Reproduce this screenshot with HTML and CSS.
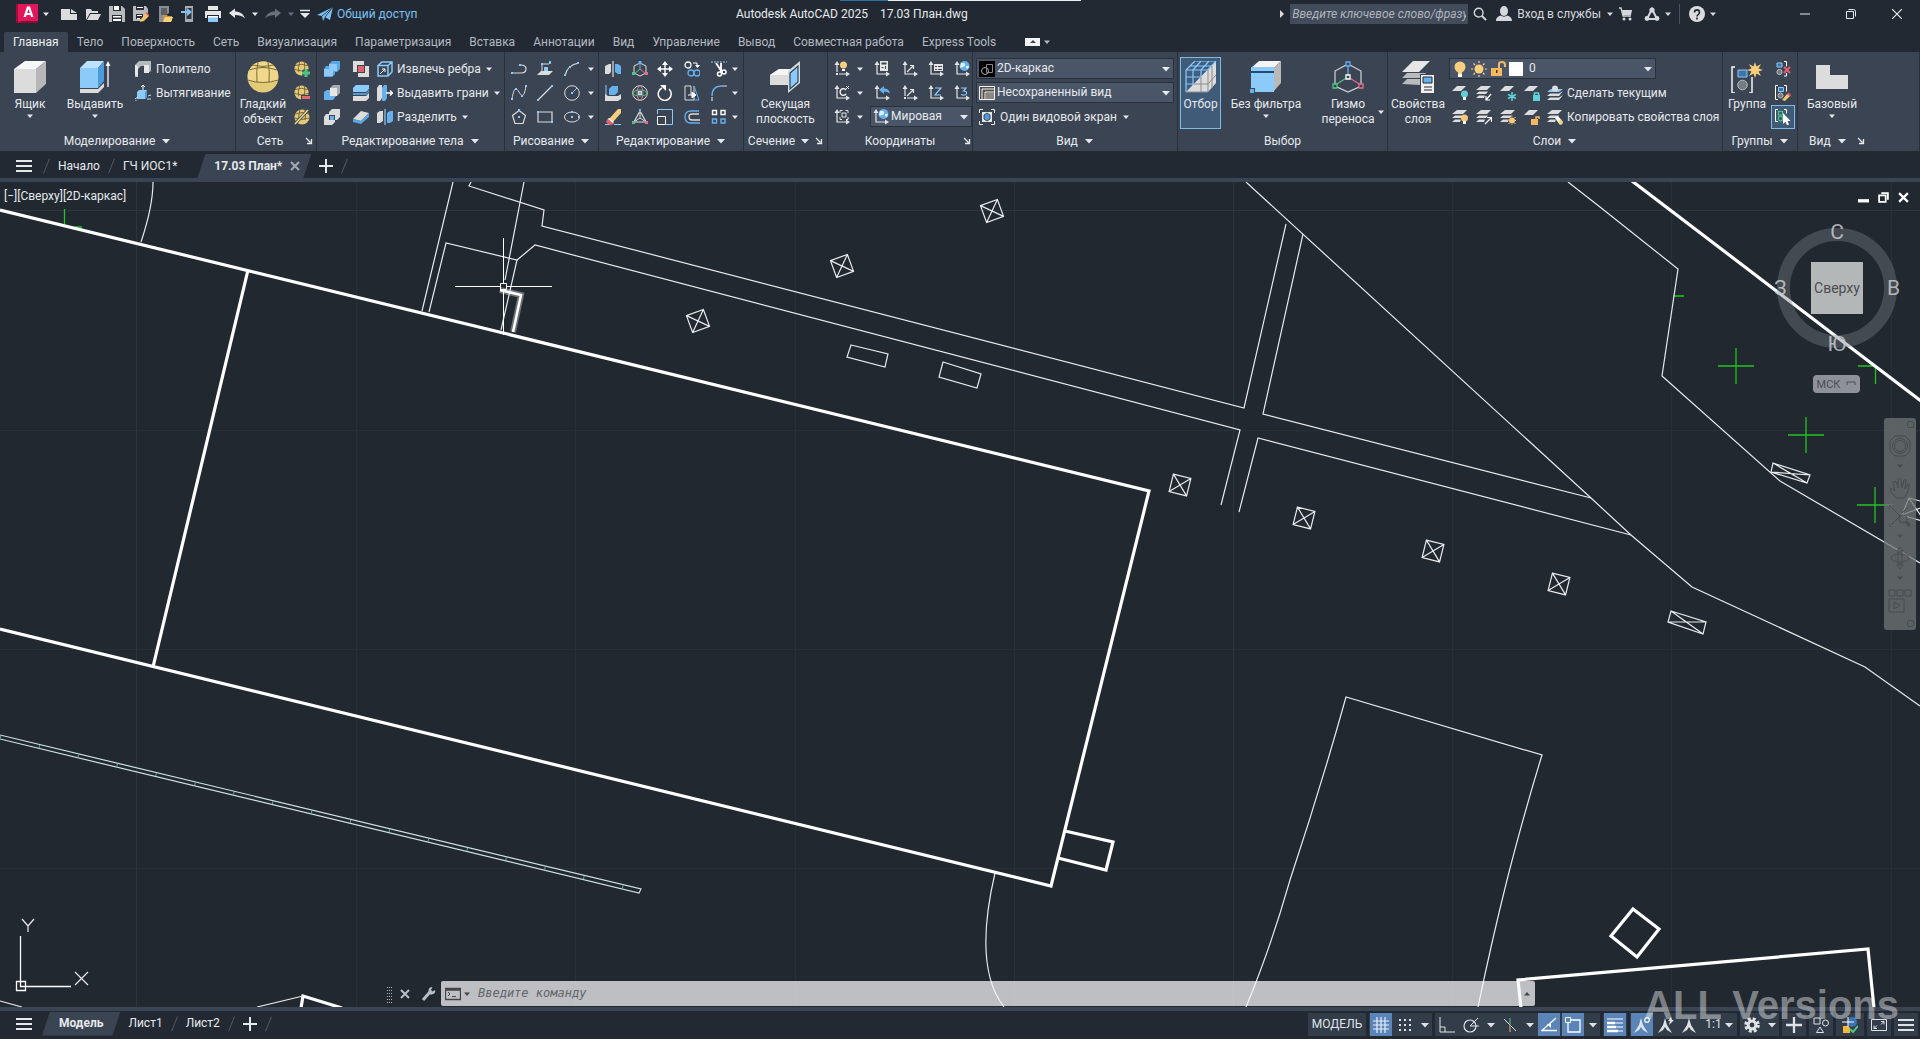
FILE: index.html
```html
<!DOCTYPE html>
<html lang="ru">
<head>
<meta charset="utf-8">
<title>Autodesk AutoCAD 2025 — 17.03 План.dwg</title>
<link rel="stylesheet" href="styles.css">
</head>
<body>
<svg class="sprite" aria-hidden="true">
  <defs>
    <symbol id="caret" viewBox="0 0 8 8"><path d="M1 2.500h6L4 6z" fill="currentColor"/></symbol>
    <symbol id="caret-lg" viewBox="0 0 10 8"><path d="M1 2h8L5 6.500z" fill="currentColor"/></symbol>
    <symbol id="launcher" viewBox="0 0 8 8"><path d="M1 1l4.500 4.500M6.500 2v4.500H2" stroke="currentColor" fill="none" stroke-width="1.300"/></symbol>
    <symbol id="menu" viewBox="0 0 16 12"><path d="M0 1h16M0 6h16M0 11h16" stroke="currentColor" stroke-width="2"/></symbol>
    <symbol id="plus" viewBox="0 0 14 14"><path d="M7 0v14M0 7h14" stroke="currentColor" stroke-width="2"/></symbol>
    <symbol id="cross" viewBox="0 0 10 10"><path d="M1 1l8 8M9 1l-8 8" stroke="currentColor" stroke-width="2"/></symbol>

    <symbol id="logo" viewBox="0 0 24 22"><path d="M1 1h5v19H1z" fill="#a50d39"/><path d="M0 20l5-4h18v4z" fill="#8d0a30"/><path d="M3 1h20v17H6l-3 2z" fill="#e2165a"/><path d="M8.500 14L12 3.500h3L18.500 14H16l-.6-2h-3.800l-.6 2zM12.200 10h2.600l-1.300-4z" fill="#fff"/></symbol>
    <symbol id="new" viewBox="0 0 16 16"><path d="M0 3h9v5h7v6H0zM10 3l6 4h-6z" fill="#dcdcdc"/></symbol>
    <symbol id="open" viewBox="0 0 16 16"><path d="M1 14V3h5l1 2h6v2H5z" fill="#dcdcdc"/><path d="M5.500 8H16l-3 6H2z" fill="#dcdcdc"/></symbol>
    <symbol id="save" viewBox="0 0 16 16"><path d="M0 0h13l3 3v13H0z" fill="#b9babc"/><path d="M4 0h8v5H4zM3 9h10v7H3z" fill="#262d37"/><path d="M5 0h5v4H5zM4 10h8v1.500H4zM4 13h8v2H4z" fill="#fff"/></symbol>
    <symbol id="saveas" viewBox="0 0 16 16"><path d="M0 0h13l2 3v4l-7 8H0z" fill="#b9babc"/><path d="M3 0h8v4H3zM3 8h7v5H3z" fill="#262d37"/><path d="M4 1h6v1H4zM4 9h5v1H4zM4 12h3v1H4z" fill="#fff"/><path d="M8 13l5-6 3 3-5 5-4 1z" fill="#f4c46c"/><path d="M12.500 7.500l3 2.500 1-1-3-3z" fill="#e0606c"/></symbol>
    <symbol id="webopen" viewBox="0 0 16 16"><path d="M2 0h10v7l-5 3v6H2z" fill="#8a8d91"/><path d="M4 2h6v7H4z" fill="#5b6068"/><path d="M6 9h4l1 1h4v5H6z" fill="#c9953c"/><path d="M8 11h8l-2 5H6z" fill="#f7d27c"/></symbol>
    <symbol id="websave" viewBox="0 0 16 16"><path d="M4 0h8v16H4z" fill="#a9abae"/><path d="M5.500 2h5v11h-5z" fill="#30363f"/><path d="M0 5h6V2l5 4-5 4V7H0z" fill="#7fc4f5"/></symbol>
    <symbol id="print" viewBox="0 0 16 16"><path d="M3 0h10v4H3zM0 5h16v7h-2V9H2v3H0z" fill="#e6e6e6"/><path d="M3 10h10v6H3z" fill="#8cc8f8"/><path d="M3 10h10v1.500H3z" fill="#fff"/></symbol>
    <symbol id="undo" viewBox="0 0 16 12"><path d="M0 5l6-4.500v3c5 0 8 2 10 7-3-3-6-3.500-10-3.500v3z" fill="currentColor"/></symbol>
    <symbol id="redo" viewBox="0 0 16 12"><path d="M16 5l-6-4.500v3c-5 0-8 2-10 7 3-3 6-3.500 10-3.500v3z" fill="currentColor"/></symbol>
    <symbol id="more" viewBox="0 0 10 9"><path d="M0 1h10" stroke="currentColor" stroke-width="1.500"/><path d="M0 3.500h10L5 8.500z" fill="currentColor"/></symbol>
    <symbol id="plane" viewBox="0 0 16 14"><path d="M0 8L16 0l-3 13-5-3-2 4-1-5z" fill="#7cc0f0"/><path d="M5 9l11-9-8 10" fill="none" stroke="#222933" stroke-width=".8"/></symbol>
    <symbol id="search" viewBox="0 0 16 16"><circle cx="6.500" cy="6.500" r="5" fill="none" stroke="currentColor" stroke-width="1.600"/><path d="M10 10l5 5" stroke="currentColor" stroke-width="2.200"/></symbol>
    <symbol id="user" viewBox="0 0 16 16"><ellipse cx="8" cy="5" rx="4" ry="5" fill="currentColor"/><path d="M0 15c0-4 3-5 5-5.500 2 1.500 4 1.500 6 0 2 .5 5 1.500 5 5.500z" fill="currentColor"/></symbol>
    <symbol id="cart" viewBox="0 0 14 14"><path d="M0 1h2l2 8h8" fill="none" stroke="currentColor" stroke-width="1.300"/><path d="M3 3h10l-1 5H4z" fill="currentColor"/><circle cx="5" cy="12" r="1.500" fill="currentColor"/><circle cx="11" cy="12" r="1.500" fill="currentColor"/></symbol>
    <symbol id="triad" viewBox="0 0 16 14"><path d="M8 2L3 12h10z" fill="none" stroke="currentColor" stroke-width="2"/><circle cx="8" cy="3" r="2.600" fill="currentColor"/><circle cx="3" cy="11.500" r="2.400" fill="currentColor"/><circle cx="13" cy="11.500" r="2.400" fill="currentColor"/></symbol>
    <symbol id="help" viewBox="0 0 16 16"><circle cx="8" cy="8" r="8" fill="#dcdcdc"/><path d="M5.500 6.500c0-3.500 5-3.500 5 0 0 2-2.500 2-2.500 4M8 11.500v2" fill="none" stroke="#222933" stroke-width="1.600"/></symbol>
    <symbol id="win-min" viewBox="0 0 10 10"><path d="M0 5h10" stroke="currentColor"/></symbol>
    <symbol id="win-max" viewBox="0 0 10 10"><path d="M.5 2.500h7v7h-7zM2.500 .5h5q2 0 2 2v5" fill="none" stroke="currentColor"/></symbol>
    <symbol id="win-close" viewBox="0 0 10 10"><path d="M0 0l10 10M10 0L0 10" stroke="currentColor" stroke-width="1.200"/></symbol>

    <symbol id="box" viewBox="0 0 32 32"><path d="M0 8L11 0h21L22 8z" fill="#f7f7f7"/><path d="M0 8h22v24H0z" fill="#dcdcdc"/><path d="M22 8L32 0v23L22 32z" fill="#b7b7b7"/></symbol>
    <symbol id="extrude" viewBox="0 0 32 32"><path d="M1 7L8 0h17l-6 7z" fill="#bde0fb"/><path d="M1 7h18v20H1z" fill="#8ccaf9"/><path d="M19 7l6-7v20l-6 7z" fill="#4d9bdc"/><path d="M1 28h18l6-6v4l-6 6H1z" fill="#dcdcdc"/><path d="M29 3v23" stroke="#fff" stroke-width="1.300"/><path d="M26.500 5L29 0l2.500 5z" fill="#fff"/></symbol>
    <symbol id="polysolid" viewBox="0 0 16 16"><path d="M0 4l4-4h12v10l-3 2H9V5H6L3 8v8H0z" fill="#b9babc"/><path d="M0 4l3 1v11l-3-2zM9 4h5v8H9z" fill="#e8e8e8"/></symbol>
    <symbol id="presspull" viewBox="0 0 16 16"><path d="M2 7l2-2h8v7l-2 2H2z" fill="#8ccaf9"/><path d="M10 7l2-2v7l-2 2z" fill="#4d9bdc"/><path d="M8 5V0M6 2l2-2 2 2" stroke="#fff" fill="none"/><path d="M0 14l3-2M0 16h2M12 14h4M13 11l3-1" stroke="#dcdcdc"/></symbol>
    <symbol id="sphere" viewBox="0 0 32 32"><circle cx="16" cy="16" r="15.500" fill="#e3ca78"/><path d="M2 9C6 3 10 .5 16 .5S27 3 30 9c2 6 1 8 0 12H2C.5 17 0 13 2 9z" fill="#efd88c"/><path d="M2 9q14-5 28 0M.5 19q15 5 31 0M11 1q-2 9-1 20M21 1q2 9 1 20M5 4q11 3 22 0" fill="none" stroke="#7c6a33"/></symbol>
    <symbol id="ball" viewBox="0 0 16 16"><circle cx="8" cy="8" r="7.500" fill="#e3ca78"/><path d="M1 5q7-3 14 0M.5 9q7 3 15 0M6 1q-2 6-1 11M11 1q1 6 0 10" fill="none" stroke="#6c5c30" stroke-width=".9"/></symbol>
    <symbol id="ball-plus" viewBox="0 0 16 16"><use href="#ball" width="15" height="15"/><path d="M12 8v8M8 12h8" stroke="#3b4453" stroke-width="5"/><path d="M12 8v8M8 12h8" stroke="#4fc67f" stroke-width="3"/></symbol>
    <symbol id="ball-minus" viewBox="0 0 16 16"><use href="#ball" width="15" height="15"/><path d="M7 12.500h9" stroke="#3b4453" stroke-width="5"/><path d="M8 12.500h8" stroke="#e06670" stroke-width="3"/></symbol>
    <symbol id="ball-cut" viewBox="0 0 16 16"><use href="#ball"/><path d="M0 16L15 0" stroke="#3b4453" stroke-width="3"/><path d="M1 15L14 1" stroke="#efd88c" stroke-width="1.500"/></symbol>

    <symbol id="union" viewBox="0 0 16 16"><path d="M5 3l3-3h8v8l-3 3h-2v2l-3 3H0V8l2-3h3z" fill="#5aa6e3"/><path d="M5 3h8v7H9v5H0V8h5z" fill="#8ccaf9"/></symbol>
    <symbol id="subtract" viewBox="0 0 16 16"><path d="M0 7l3-2h3v6h6l-3 4H0z" fill="#66b0ee"/><path d="M6 3l3-3h7v8l-3 3H6z" fill="#a9abae"/><path d="M6 3h7v8H6z" fill="#e6e6e6"/></symbol>
    <symbol id="intersect" viewBox="0 0 16 16"><path d="M5 3l3-3h8v8l-3 3h-2v2l-3 3H0V8l2-3h3z" fill="#dcdcdc"/><path d="M5 6h6v5H5z" fill="#3b4453"/><path d="M6 7h4v4H6z" fill="#66b0ee"/></symbol>
    <symbol id="interfere" viewBox="0 0 16 16"><path d="M0 0h11v5h5v11H5v-5H0z" fill="#dcdcdc"/><path d="M4 4h8v8H4z" fill="#3b4453"/><path d="M5 5h6v6H5z" fill="#e0606c"/></symbol>
    <symbol id="slice" viewBox="0 0 16 16"><path d="M0 3l3-3h13v4l-3 3H0z" fill="#8ccaf9"/><path d="M0 8h13l3-3v2l-3 3H0z" fill="#4d9bdc"/><path d="M0 11h13l3-3v5l-3 3H0z" fill="#dcdcdc"/></symbol>
    <symbol id="thicken" viewBox="0 0 16 16"><path d="M0 10l8-8 8 2-8 8z" fill="#dcdcdc"/><path d="M0 10l8 2 8-8v4l-8 7-8-2z" fill="#5aa6e3"/></symbol>
    <symbol id="edges" viewBox="0 0 16 16"><path d="M1 4.500L5 1h10v10l-4 4H1zM1 4.500h10V15M11 4.500L15 1" fill="none" stroke="#8ccaf9" stroke-width="1.500"/><path d="M3 13l5-5M5 8h3v3" fill="none" stroke="#fff"/></symbol>
    <symbol id="extface" viewBox="0 0 16 16"><path d="M0 3l2-3h3v13l-2 3H0z" fill="#dcdcdc"/><path d="M5 3l2-3h3v13l-2 3H5z" fill="#66b0ee"/><path d="M9 8h6M13 5.500L15.500 8 13 10.500" stroke="#fff" fill="none" stroke-width="1.300"/></symbol>
    <symbol id="separate" viewBox="0 0 16 16"><path d="M0 4l3-2h3v10l-3 2H0z" fill="#dcdcdc"/><path d="M10 4l3-2h3v10l-3 2h-3z" fill="#66b0ee"/><path d="M8 0v16" stroke="#8ccaf9" stroke-width="1.200"/></symbol>

    <symbol id="pline" viewBox="0 0 16 16"><path d="M1 12h9q5 0 5-4t-5-4" fill="none" stroke="#dcdcdc" stroke-width="1.200"/><path d="M0 11h2v2H0zM8 3h2v2H8z" fill="#8ccaf9"/></symbol>
    <symbol id="plane3d" viewBox="0 0 16 16"><path d="M0 14l4-4h12l-4 4z" fill="#dcdcdc"/><path d="M5 10V3h7" fill="none" stroke="#dcdcdc"/><path d="M4 2h2v2H4zM12 0h2v3h-2zM7 6h4v4H7z" fill="#8ccaf9"/></symbol>
    <symbol id="arc" viewBox="0 0 16 16"><path d="M1 15Q3 4 15 2" fill="none" stroke="#dcdcdc" stroke-width="1.200"/><path d="M0 13h2v2H0zM5 5h2v2H5zM13 1h2v2h-2z" fill="#8ccaf9"/></symbol>
    <symbol id="spline" viewBox="0 0 16 16"><path d="M1 14C3 2 5 2 8 7s5 6 7-6" fill="none" stroke="#dcdcdc"/><path d="M0 13h2v2H0zM4 3h2v2H4zM10 10h2v2h-2zM14 0h2v2h-2z" fill="#8ccaf9"/></symbol>
    <symbol id="line" viewBox="0 0 16 16"><path d="M1 15L15 1" stroke="#dcdcdc" stroke-width="1.200"/><path d="M0 14h2v2H0zM14 0h2v2h-2z" fill="#8ccaf9"/></symbol>
    <symbol id="circle" viewBox="0 0 16 16"><circle cx="8" cy="8" r="7.300" fill="none" stroke="#dcdcdc"/><path d="M8 8l5-5" stroke="#8ccaf9"/><path d="M7 7h2v2H7z" fill="#8ccaf9"/></symbol>
    <symbol id="polygon" viewBox="0 0 16 16"><path d="M8 1.500l6.500 5-2.500 8H4l-2.500-8z" fill="none" stroke="#dcdcdc" stroke-width="1.200"/><path d="M7 7h2v2H7zM7 0h2v2H7z" fill="#8ccaf9"/></symbol>
    <symbol id="rect" viewBox="0 0 16 16"><path d="M1 3h14v10H1z" fill="none" stroke="#dcdcdc" stroke-width="1.200"/><path d="M0 2h2v2H0zM14 12h2v2h-2z" fill="#8ccaf9"/></symbol>
    <symbol id="ellipse" viewBox="0 0 16 16"><ellipse cx="8" cy="8" rx="7.500" ry="5" fill="none" stroke="#dcdcdc"/><path d="M7 7h2v2H7zM14 7h2v2h-2zM7 2h2v2H7z" fill="#8ccaf9"/></symbol>

    <symbol id="mirror" viewBox="0 0 16 16"><path d="M0 5l4-2h2v8l-2 2H0z" fill="#dcdcdc"/><path d="M10 3h3l3 2v8h-3l-3-2z" fill="#66b0ee"/><path d="M8 0v16" stroke="#fff"/></symbol>
    <symbol id="gizmo-move" viewBox="0 0 16 16"><path d="M8 2l6 3v7l-6 3-6-3V5z" fill="none" stroke="#dcdcdc"/><path d="M8 8V1" stroke="#66b0ee"/><path d="M8 8l-6 5" stroke="#4fc67f"/><path d="M8 8l6 5" stroke="#e0708a"/><path d="M6.500 0h3v3h-3z" fill="#66b0ee"/><path d="M0 11h3v3H0z" fill="#4fc67f"/><path d="M13 11h3v3h-3z" fill="#e0708a"/></symbol>
    <symbol id="move" viewBox="0 0 16 16"><path d="M8 1v14M1 8h14" stroke="#fff" stroke-width="1.400"/><path d="M8 0l3 4H5zM8 16l3-4H5zM0 8l4-3v6zM16 8l-4-3v6z" fill="#fff"/></symbol>
    <symbol id="copy" viewBox="0 0 16 16"><circle cx="4" cy="4" r="3" fill="none" stroke="#fff" stroke-width="1.300"/><circle cx="7" cy="12" r="3" fill="none" stroke="#66b0ee" stroke-width="1.300"/><circle cx="13" cy="12" r="3" fill="none" stroke="#66b0ee" stroke-width="1.300"/><path d="M9 2h4v4" fill="none" stroke="#fff"/><path d="M11 4h5l-2.500 3z" fill="#fff"/></symbol>
    <symbol id="trim" viewBox="0 0 16 16"><path d="M0 1h16" stroke="#8ccaf9" stroke-dasharray="2 1"/><path d="M5 2l6 9M10 2v9" stroke="#fff" stroke-width="1.800"/><circle cx="8.500" cy="13" r="2" fill="none" stroke="#fff" stroke-width="1.500"/><circle cx="13" cy="11" r="2" fill="none" stroke="#fff" stroke-width="1.500"/></symbol>
    <symbol id="align" viewBox="0 0 16 16"><path d="M1 0v15" stroke="#8ccaf9"/><path d="M4 4l3-3h6v6l-3 3H4z" fill="#66b0ee"/><path d="M0 9l3 2h10l3-2v5l-3 2H0z" fill="#dcdcdc"/></symbol>
    <symbol id="gizmo-rot" viewBox="0 0 16 16"><circle cx="8" cy="8" r="7.300" fill="none" stroke="#dcdcdc"/><ellipse cx="8" cy="8" rx="3" ry="7" fill="none" stroke="#e0708a"/><ellipse cx="8" cy="8" rx="7" ry="3" fill="none" stroke="#4fc67f"/><path d="M6.500 6.500h3v3h-3z" fill="#66b0ee" stroke="#fff" stroke-width=".8"/></symbol>
    <symbol id="rotate" viewBox="0 0 16 16"><path d="M5 3a6.500 6.500 0 1 0 7 1" fill="none" stroke="#fff" stroke-width="1.500"/><path d="M3 0h6v6z" fill="#fff"/></symbol>
    <symbol id="stretch" viewBox="0 0 16 16"><path d="M10 1v14H1V1h6v9" fill="none" stroke="#dcdcdc"/><path d="M10 1l5 14h-5" fill="none" stroke="#66b0ee"/><path d="M4 10h6M8 7l4 3-4 3z" stroke="#fff" fill="#fff"/></symbol>
    <symbol id="fillet" viewBox="0 0 16 16"><path d="M1 16v-4M11 1h5" stroke="#dcdcdc" stroke-width="1.200"/><path d="M1 11Q1 1 11 1" fill="none" stroke="#66b0ee" stroke-width="1.400"/></symbol>
    <symbol id="erase" viewBox="0 0 16 16"><path d="M4 10L13 0h3v4l-8 9z" fill="#f4cf7c"/><path d="M3 9l6 5-2 2H4L1 13z" fill="#e0606c"/><path d="M3 10l5 4 1-1-5-4z" fill="#fff"/><path d="M0 15.500h4M9 15.500h7" stroke="#8ccaf9"/></symbol>
    <symbol id="gizmo-scale" viewBox="0 0 16 16"><path d="M8 2l6 11H2z" fill="none" stroke="#dcdcdc" stroke-width="1.200"/><path d="M8 9V1M8 9l-6 4M8 9l6 4" stroke="#dcdcdc"/><path d="M7 0h2v3H7z" fill="#66b0ee"/><path d="M0 12h3v3H0z" fill="#4fc67f"/><path d="M13 12h3v3h-3z" fill="#e0708a"/></symbol>
    <symbol id="scale" viewBox="0 0 16 16"><path d="M.5 5V.5h15v15H9" fill="none" stroke="#8ccaf9"/><path d="M.5 7.500h8v8h-8z" fill="none" stroke="#fff"/></symbol>
    <symbol id="offset" viewBox="0 0 16 16"><path d="M15 2H7Q1 2 1 8t6 6h9" fill="none" stroke="#66b0ee" stroke-width="1.300"/><path d="M15 5H8Q5 5 5 8t3 3h8" fill="none" stroke="#dcdcdc" stroke-width="1.300"/></symbol>
    <symbol id="array" viewBox="0 0 16 16"><path d="M1.500 1.500h4v4h-4zM10 1.500h4v4h-4z" fill="none" stroke="#fff" stroke-width="1.400"/><path d="M1.500 10h4v4h-4zM10 10h4v4h-4z" fill="none" stroke="#66b0ee" stroke-width="1.400"/></symbol>
    <symbol id="section" viewBox="0 0 32 32"><path d="M0 14l9-6h9v16H0z" fill="#dcdcdc"/><path d="M0 14l9-6h11v6z" fill="#f5f5f5"/><path d="M18 10L30 0v22L18 32z" fill="#dcdcdc"/><path d="M20 12l8-7v16l-8 7z" fill="#8ccaf9" stroke="#27435f" stroke-width="1.200"/></symbol>

    <symbol id="ax" viewBox="0 0 16 16"><path d="M3 2v11h11" fill="none" stroke="#e6e6e6" stroke-width="1.200"/><path d="M3 0l2.500 4h-5zM16 13l-4-2.500v5z" fill="#e6e6e6"/></symbol>
    <symbol id="ucs-bulb" viewBox="0 0 16 16"><path d="M3 2v9M5 13h9" fill="none" stroke="#e6e6e6" stroke-width="1.200"/><path d="M3 0l2.500 4h-5zM16 13l-4-2.500v5zM2 12h2v2H2z" fill="#e6e6e6"/><circle cx="9.500" cy="4" r="3.500" fill="#f8d080"/><path d="M8 8h3v2H8z" fill="#fff"/></symbol>
    <symbol id="ucs-rx" viewBox="0 0 16 16"><use href="#ax"/><path d="M12 5a3.300 3.300 0 1 0 0 4" fill="none" stroke="#fff" stroke-width="1.300"/><path d="M12 1l3 3M15 1l-3 3" stroke="#fff" stroke-width=".8"/></symbol>
    <symbol id="ucs-view" viewBox="0 0 16 16"><use href="#ax"/><path d="M6 4V1.500h2.500M11.500 1.500H14V4M14 8v2.500h-2M8 10.500H6V8" fill="none" stroke="#e6e6e6"/><path d="M8 4h4v4H8z" fill="none" stroke="#e6e6e6"/></symbol>
    <symbol id="ucs-calc" viewBox="0 0 16 16"><use href="#ax"/><path d="M6 0h8v10H6z" fill="#e6e6e6"/><path d="M7.500 1.500h5v2h-5zM7.500 6h2v1h-2zM11 5h1v3h-1z" fill="#3b4453"/></symbol>
    <symbol id="ucs-obj" viewBox="0 0 16 16"><use href="#ax"/><path d="M5 11l6-6M8 4.500h3.500V8" fill="none" stroke="#e6e6e6" stroke-width="1.200"/></symbol>
    <symbol id="ucs-named" viewBox="0 0 16 16"><use href="#ax"/><path d="M6 3h9v7H6z" fill="#e6e6e6"/><path d="M7 5h2v1H7zM10 5h4v1h-4zM7 8h2v1H7zM10 8h4v1h-4z" fill="#3b4453"/></symbol>
    <symbol id="ucs-world" viewBox="0 0 16 16"><use href="#ax"/><circle cx="10.500" cy="5" r="5" fill="#66b0ee"/><path d="M7 2q3-1 4 1t-2 3-3 0zM12 5l3 0-1 3-2-1z" fill="#d9f0ff"/></symbol>
    <symbol id="ucs-prev" viewBox="0 0 16 16"><use href="#ax"/><path d="M5 5l5-4v2.500q5 0 6 5-3-2-6-2V9z" fill="#66b0ee"/></symbol>
    <symbol id="ucs-org" viewBox="0 0 16 16"><path d="M3 2v9M5 13h9M5 11l6-6M8 4.500h3.500V8" fill="none" stroke="#e6e6e6" stroke-width="1.200"/><path d="M3 0l2.500 4h-5zM16 13l-4-2.500v5zM2 12h2v2H2z" fill="#e6e6e6"/></symbol>
    <symbol id="ucs-z" viewBox="0 0 16 16"><use href="#ax"/><path d="M7 3h6l-6 7h6" fill="none" stroke="#8ccaf9" stroke-width="1.200"/></symbol>
    <symbol id="ucs-3" viewBox="0 0 16 16"><use href="#ax"/><path d="M7 3h5L9.500 6q3.500 0 3 2.500T7 9.500" fill="none" stroke="#8ccaf9" stroke-width="1.200"/></symbol>

    <symbol id="wire" viewBox="0 0 16 16"><path d="M0 0h16v16H0z" fill="#000"/><circle cx="6" cy="10" r="3.500" fill="none" stroke="#aaa"/><path d="M7.500 3.500h6v8h-6z" fill="none" stroke="#888"/></symbol>
    <symbol id="unsaved" viewBox="0 0 16 14"><path d="M.5 .5h15v13H.5z" fill="#55504a" stroke="#f2f2f2"/><path d="M3 3h12M3 3v10M6 6h9M6 6v7" stroke="#f2f2f2"/><path d="M7 7h8v6H7z" fill="#8b8780"/></symbol>
    <symbol id="vport" viewBox="0 0 16 16"><path d="M.5 4V.5H4M12 .5h3.500V4M15.500 12v3.500H12M4 15.500H.5V12" fill="none" stroke="#e6e6e6"/><path d="M3 3h10v10H3z" fill="#e6e6e6"/><path d="M5 6l3-2 3 2v4l-3 2-3-2z" fill="#4d9bdc" stroke="#222933" stroke-width=".8"/></symbol>
    <symbol id="cull" viewBox="0 0 32 32"><path d="M1 9L10 0h21v22l-8 9H1z" fill="#3d5f82"/><path d="M1 31L31 0v22l-8 9z" fill="#dcdcdc"/><path d="M1 9h22M1 9v22M1 16h15M1 23h8M8 9v15M16 9v7M1 9L10 0M8 9l8-9M16 9l8-9M23 9l8-9M10 0h21M5 5h22" fill="none" stroke="#8ccaf9" stroke-width="1.200"/><path d="M9 23h14l8-9M23 9v22M16 16v15M27 5v22M1 31h22" fill="none" stroke="#8c8c8c"/></symbol>
    <symbol id="nofilter" viewBox="0 0 32 32"><path d="M1 7L9 0h22l-7 7z" fill="#f5f5f5"/><path d="M24 7l7-7v22l-7 8z" fill="#b9b9b9"/><path d="M1 6h23v25H5v-4H1z" fill="#8ccaf9"/><path d="M1 10h23v2H1z" fill="#244a70"/><path d="M0 28h4v4H0z" fill="#66b0ee"/></symbol>
    <symbol id="gizmo" viewBox="0 0 32 32"><path d="M16 3l13 7v15l-13 6-13-6V10z" fill="none" stroke="#d0d4d8" stroke-width="1.200"/><path d="M16 16V3" stroke="#66b0ee" stroke-width="1.300"/><path d="M16 16L3 24" stroke="#4fc67f" stroke-width="1.300"/><path d="M16 16l13 8" stroke="#e0708a" stroke-width="1.300"/><g fill="#3b4453" stroke-width="1.300"><path d="M14 1h4v4h-4z" stroke="#66b0ee"/><path d="M1 23h4v4H1z" stroke="#4fc67f"/><path d="M27 23h4v4h-4z" stroke="#e0708a"/><path d="M14 14h4v4h-4z" stroke="#fff"/></g></symbol>
    <symbol id="layerprops" viewBox="0 0 32 32"><path d="M0 23l5-5h16l-3 6zM0 17l5-5h19l-5 5z" fill="#b9babc"/><path d="M0 11L11 0h17L17 11z" fill="#e6e6e6"/><path d="M18 13h14v19H18z" fill="#3b4453"/><path d="M19 14h13v18H19z" fill="#f0f0f0"/><path d="M21 16h9v6h-9z" fill="#66b0ee" stroke="#222933"/><path d="M22 26h8M22 29h8" stroke="#222933"/></symbol>

    <symbol id="bulb" viewBox="0 0 16 16"><circle cx="8" cy="6" r="5.500" fill="#f8d080"/><path d="M6 10h4v3H6z" fill="#f8d080"/><path d="M6 13h4v3H6z" fill="#fff"/></symbol>
    <symbol id="sun" viewBox="0 0 16 16"><circle cx="8" cy="8" r="4.500" fill="#f8d080"/><path d="M8 0v2M8 14v2M0 8h2M14 8h2M2.500 2.500L4 4M12 12l1.500 1.500M13.500 2.500L12 4M4 12l-1.500 1.500" stroke="#f8d080" stroke-width="1.200"/></symbol>
    <symbol id="unlock" viewBox="0 0 16 16"><path d="M1 7h11v8H1z" fill="#f4b860"/><path d="M9 7V3q0-2 3-2t3 3v2" fill="none" stroke="#f4b860" stroke-width="2"/><path d="M6 9h1.500v3H6z" fill="#4a3516"/></symbol>
    <symbol id="stack" viewBox="0 0 16 16"><path d="M0 5l5-4h10l-4 4zM0 9l3-2.500h9L10 9zM0 13l3-2.500h6L8 13z" fill="#dcdcdc"/></symbol>
    <symbol id="l-off" viewBox="0 0 16 16"><path d="M0 6l5-5h9l-5 5z" fill="#dcdcdc"/><circle cx="12.500" cy="9" r="3.500" fill="#5fd0d6"/><path d="M11 12h3v3h-3z" fill="#fff"/></symbol>
    <symbol id="l-iso" viewBox="0 0 16 16"><use href="#stack"/><path d="M15 9l-5 6M10 11v4h4" fill="none" stroke="#fff" stroke-width="1.200"/></symbol>
    <symbol id="l-freeze" viewBox="0 0 16 16"><path d="M0 6l5-5h9l-5 5z" fill="#dcdcdc"/><path d="M12 7v9M8 9.500l8 4M16 9.500l-8 4" stroke="#5fd0d6" stroke-width="1.600"/></symbol>
    <symbol id="l-lock" viewBox="0 0 16 16"><path d="M0 6l5-5h9l-5 5z" fill="#dcdcdc"/><path d="M9 10h7v6H9z" fill="#5fd0d6"/><path d="M10.500 10V8h4v2" fill="none" stroke="#5fd0d6" stroke-width="1.500"/></symbol>
    <symbol id="l-cur" viewBox="0 0 16 16"><path d="M0 7l4-3h12l-4 3z" fill="#8ccaf9"/><circle cx="8" cy="3.500" r="3" fill="#dcdcdc"/><path d="M0 11l3-2.500h9L16 6l-4 5zM0 15l3-2.500h9l4-2.500-4 5z" fill="#dcdcdc"/></symbol>
    <symbol id="l-on" viewBox="0 0 16 16"><use href="#stack"/><circle cx="12.500" cy="9" r="3.500" fill="#f8c878"/><path d="M11 12h3v3h-3z" fill="#fff"/></symbol>
    <symbol id="l-uniso" viewBox="0 0 16 16"><use href="#stack"/><path d="M9 15l6-6M11 8.500h4.500V13" fill="none" stroke="#fff" stroke-width="1.200"/></symbol>
    <symbol id="l-thaw" viewBox="0 0 16 16"><use href="#stack"/><circle cx="12" cy="11.500" r="3" fill="#f8c878"/><path d="M12 6.500v1M12 15.500v1M7 11.500h1M16 11.500h-1M8.500 8l1 1M15.500 8l-1 1M8.500 15l1-1M15.500 15l-1-1" stroke="#f8c878"/></symbol>
    <symbol id="l-unlock" viewBox="0 0 16 16"><path d="M0 6l5-5h9l-5 5z" fill="#dcdcdc"/><path d="M7 10h7v6H7z" fill="#f4b860"/><path d="M12 10V8h3v2" fill="none" stroke="#f4b860" stroke-width="1.500"/></symbol>
    <symbol id="l-match" viewBox="0 0 16 16"><use href="#stack"/><path d="M8 9l3-2 5 6-3 3z" fill="#fff"/><path d="M11 13l3-3 2 4-2 2z" fill="#f4cf7c"/></symbol>

    <symbol id="group" viewBox="0 0 32 32"><path d="M4 6H1v26h3M18 32h3V16" fill="none" stroke="#fff" stroke-width="1.400"/><path d="M7 9h9v7H7z" fill="#3f74a8" stroke="#8ccaf9"/><circle cx="11.500" cy="24" r="4.800" fill="#777c84" stroke="#b9babc"/><path d="M24 1l1.500 4.500L30 3l-2.500 4.500L32 9l-4.500 1.500L30 15l-4.500-2.500L24 17l-1.500-4.500L18 15l2.500-4.500L16 9l4.500-1.500L18 3l4.500 2.500z" fill="#f8cf7a"/></symbol>
    <symbol id="ungroup" viewBox="0 0 16 16"><path d="M2 2h5v4H2z" fill="#3f74a8" stroke="#8ccaf9"/><circle cx="4.500" cy="11" r="2.600" fill="#777c84" stroke="#b9babc"/><path d="M9 .5h2.500v5M9 15h2.500v-3" fill="none" stroke="#fff"/><path d="M9 6l6 6M15 6l-6 6" stroke="#e0606c" stroke-width="2"/></symbol>
    <symbol id="groupedit" viewBox="0 0 16 16"><path d="M3 .5H.5v14H3M9 .5h2.500v6" fill="none" stroke="#fff"/><path d="M3.500 2.500h5v4h-5z" fill="#3f74a8" stroke="#8ccaf9"/><circle cx="5.500" cy="10.500" r="2.500" fill="#777c84" stroke="#b9babc"/><path d="M7 15l5-6 3 2-5 5z" fill="#f4c46c"/><path d="M12 9l1.500-1.500L16 10l-1 1.500z" fill="#e0606c"/></symbol>
    <symbol id="groupsel" viewBox="0 0 16 16"><path d="M3 .5H.5v12H3M9 .5h2.500v4" fill="none" stroke="#fff"/><path d="M3.500 2.500h4v3.500h-4z" fill="none" stroke="#4fc67f" stroke-width="1.200"/><circle cx="5.500" cy="9.500" r="2.300" fill="none" stroke="#4fc67f" stroke-width="1.200"/><path d="M8 4l7.500 8h-3l1.500 3.500-2 .8-1.500-3.500L8 15z" fill="#fff"/></symbol>
    <symbol id="base" viewBox="0 0 32 24"><path d="M0 0h14v10h18v14H0z" fill="#dcdcdc"/></symbol>

    <symbol id="wrench" viewBox="0 0 14 16"><path d="M1 14l7-8" stroke="currentColor" stroke-width="3"/><path d="M13 4l-2.500 1.500L9 4l1.500-3Q6 1 6.500 5.500T11 8q3-1 2-4z" fill="currentColor"/></symbol>
    <symbol id="prompt" viewBox="0 0 16 12"><path d="M.5 .5h15v11H.5zM0 2h16" fill="none" stroke="#444" stroke-width="1.300"/><path d="M3 4l2 2-2 2M7 8.500h4" fill="none" stroke="#444"/></symbol>

    <symbol id="s-grid" viewBox="0 0 16 16"><path d="M4 0v16M8 0v16M12 0v16M0 4h16M0 8h16M0 12h16" stroke="#e8f0f8" stroke-width="1.200"/></symbol>
    <symbol id="s-snap" viewBox="0 0 16 16"><path d="M2 3h14M2 8h14M2 13h14" stroke="currentColor" stroke-width="2" stroke-dasharray="2 3"/></symbol>
    <symbol id="s-ortho" viewBox="0 0 16 16"><path d="M1 0v15h15M1 10h5v5" fill="none" stroke="currentColor"/></symbol>
    <symbol id="s-polar" viewBox="0 0 16 16"><circle cx="7" cy="9" r="6" fill="none" stroke="currentColor" stroke-width="1.200"/><path d="M7 9h9M7 9l8-8" stroke="currentColor"/></symbol>
    <symbol id="s-iso" viewBox="0 0 16 16"><path d="M2 2l12 12" stroke="currentColor"/><path d="M8 1v14" stroke="#4fc67f"/><path d="M8 8v7" stroke="#d07070"/></symbol>
    <symbol id="s-track" viewBox="0 0 16 16"><path d="M16 13.500H1L15 1" fill="none" stroke="#fff" stroke-width="1.300"/><path d="M6 7h4v4z" fill="#fff"/></symbol>
    <symbol id="s-osnap" viewBox="0 0 16 16"><path d="M3 5v10h12V3H6" fill="none" stroke="#fff" stroke-width="1.300"/><path d="M.5 .5h5v5h-5z" fill="#5b84b8" stroke="#fff"/></symbol>
    <symbol id="s-lwt" viewBox="0 0 16 16"><path d="M0 2h16" stroke="#fff"/><path d="M0 6h8M0 10h9M0 14h11" stroke="#fff" stroke-width="2.500"/><path d="M8 6h8M8 10h8M8 14h8" stroke="#fff"/></symbol>
    <symbol id="s-anno" viewBox="0 0 16 16"><path d="M7 1L9 8l5 8-5-3-2-3-2 3-5 3 5-8z" fill="currentColor"/></symbol>
    <symbol id="s-anno-o" viewBox="0 0 16 16"><use href="#s-anno"/><circle cx="13" cy="3" r="2.300" fill="none" stroke="#fff" stroke-width="1.200"/></symbol>
    <symbol id="s-anno-z" viewBox="0 0 16 16"><use href="#s-anno"/><path d="M13 0l-3 4h2l-1 4 5-5h-2z" fill="currentColor"/></symbol>
    <symbol id="s-gear" viewBox="0 0 16 16"><circle cx="8" cy="8" r="6.300" fill="none" stroke="currentColor" stroke-width="3" stroke-dasharray="2.900 2.050"/><circle cx="8" cy="8" r="3.900" fill="none" stroke="currentColor" stroke-width="3"/></symbol>
    <symbol id="s-shapes" viewBox="0 0 16 16"><path d="M1 1h6v6H1zM7 10l3.500 5.500h-7z" fill="none" stroke="currentColor"/><circle cx="12.500" cy="6" r="3" fill="none" stroke="currentColor"/></symbol>
    <symbol id="s-hw" viewBox="0 0 16 16"><path d="M1 9h5l2 2v5H1z" fill="#f0b840"/><circle cx="10" cy="5" r="5" fill="#3f80c8" opacity=".8"/><path d="M6 0v10M0 5h12" stroke="#fff"/><path d="M8 12l3 3 5-6" fill="none" stroke="#4fc67f" stroke-width="2"/></symbol>
    <symbol id="s-full" viewBox="0 0 16 12"><path d="M.5 .5h15v11H.5z" fill="none" stroke="currentColor"/><path d="M3 9.500l3-3M3 6.500v3h3M13 2.500l-3 3M13 5.500v-3h-3" fill="none" stroke="currentColor"/></symbol>

    <symbol id="nav-wheel" viewBox="0 0 22 22"><path d="M6 1h10l5 5v10l-5 5H6l-5-5V6z" fill="none" stroke="currentColor"/><circle cx="11" cy="11" r="5.500" fill="none" stroke="currentColor"/><circle cx="11" cy="11" r="7.500" fill="none" stroke="currentColor"/></symbol>
    <symbol id="nav-hand" viewBox="0 0 22 22"><path d="M7 21q-4-4-6-9 2-2 5 2L4 5q2-2 4 1l1 5V2q2-2 3 0l1 9 2-8q2-1 2 1l-1 8 3-5q2 0 1 2-1 8-5 12z" fill="none" stroke="currentColor"/></symbol>
    <symbol id="nav-zoom" viewBox="0 0 22 22"><path d="M2 2l9 9M2 20l9-9M19 2l-6 6M0 4V0h4M0 18v4h4" fill="none" stroke="currentColor"/><circle cx="14" cy="14" r="4" fill="none" stroke="currentColor"/><path d="M17 17l4 4" stroke="currentColor" stroke-width="2.500"/></symbol>
    <symbol id="nav-orbit" viewBox="0 0 22 22"><path d="M11 0l3 4H8zM11 22l3-4H8zM9 5h4v12H9z" fill="none" stroke="currentColor"/><ellipse cx="11" cy="11" rx="9" ry="4" fill="none" stroke="currentColor"/></symbol>
    <symbol id="nav-motion" viewBox="0 0 24 24"><path d="M1 1h6v6H1zM9 1h6v6H9zM17 1h6v6h-6zM1 10h15v13H1zM6 13l6 3.500L6 20z" fill="none" stroke="currentColor"/></symbol>

    <g id="tree"><path d="M-9-9H9V9H-9zM-9-9L9 9M9-9L-9 9" fill="none" stroke="#e8eaec" stroke-width="1.200"/></g>
    <path id="mark" d="M-18 0H18M0-18V18" stroke="#22c322" stroke-width="1.300"/>
  </defs>
</svg>

<div class="app">
  <header class="titlebar">
    <div class="quick">
      <button class="logo" aria-label="Меню приложения"><svg class="i24"><use href="#logo"/></svg><svg class="i8"><use href="#caret"/></svg></button>
      <button class="qa" aria-label="Создать"><svg class="i16"><use href="#new"/></svg></button>
      <button class="qa" aria-label="Открыть"><svg class="i16"><use href="#open"/></svg></button>
      <button class="qa" aria-label="Сохранить"><svg class="i16"><use href="#save"/></svg></button>
      <button class="qa" aria-label="Сохранить как"><svg class="i16"><use href="#saveas"/></svg></button>
      <button class="qa" aria-label="Открыть из веб"><svg class="i16"><use href="#webopen"/></svg></button>
      <button class="qa" aria-label="Сохранить в веб"><svg class="i16"><use href="#websave"/></svg></button>
      <button class="qa" aria-label="Печать"><svg class="i16"><use href="#print"/></svg></button>
      <button class="qa" aria-label="Отменить"><svg class="i16"><use href="#undo"/></svg></button>
      <button class="drop" aria-label="История отмены"><svg class="i8"><use href="#caret"/></svg></button>
      <button class="qa dim" aria-label="Повторить"><svg class="i16"><use href="#redo"/></svg></button>
      <button class="drop dim" aria-label="История повтора"><svg class="i8"><use href="#caret"/></svg></button>
      <button class="drop more" aria-label="Настройка панели"><svg class="i10"><use href="#more"/></svg></button>
      <button class="share"><svg class="i16"><use href="#plane"/></svg>Общий доступ</button>
    </div>
    <div class="doc-title"><span>Autodesk AutoCAD 2025</span><span>17.03 План.dwg</span></div>
    <div class="account">
      <span class="play"></span>
      <input class="find" type="text" aria-label="Поиск" placeholder="Введите ключевое слово/фразу">
      <button class="qa" aria-label="Найти"><svg class="i14"><use href="#search"/></svg></button>
      <button class="signin"><svg class="i16"><use href="#user"/></svg>Вход в службы<svg class="i8"><use href="#caret"/></svg></button>
      <button class="qa" aria-label="Магазин"><svg class="i14"><use href="#cart"/></svg></button>
      <button class="pair apps" aria-label="Приложения"><svg class="i16"><use href="#triad"/></svg><svg class="i8"><use href="#caret"/></svg></button>
      <span class="rule"></span>
      <button class="pair" aria-label="Справка"><svg class="i16"><use href="#help"/></svg><svg class="i8"><use href="#caret"/></svg></button>
    </div>
    <div class="window-buttons">
      <button aria-label="Свернуть"><svg class="i10"><use href="#win-min"/></svg></button>
      <button aria-label="Восстановить"><svg class="i10"><use href="#win-max"/></svg></button>
      <button aria-label="Закрыть"><svg class="i10"><use href="#win-close"/></svg></button>
    </div>
    <div class="progress"></div>
  </header>

  <nav class="ribbon-tabs">
    <button class="active">Главная</button><button>Тело</button><button>Поверхность</button><button>Сеть</button><button>Визуализация</button><button>Параметризация</button><button>Вставка</button><button>Аннотации</button><button>Вид</button><button>Управление</button><button>Вывод</button><button>Совместная работа</button><button>Express Tools</button>
    <button class="collapse" aria-label="Свернуть ленту"><span class="chip"></span><svg class="i8"><use href="#caret"/></svg></button>
  </nav>

  <div class="ribbon">
    <section class="panel p-model">
      <div class="body">
        <button class="big"><svg class="i32"><use href="#box"/></svg><span>Ящик</span><svg class="i8"><use href="#caret"/></svg></button>
        <button class="big"><svg class="i32"><use href="#extrude"/></svg><span>Выдавить</span><svg class="i8"><use href="#caret"/></svg></button>
        <div class="list">
          <button class="row"><svg class="i16"><use href="#polysolid"/></svg>Политело</button>
          <button class="row"><svg class="i16"><use href="#presspull"/></svg>Вытягивание</button>
        </div>
      </div>
      <h2>Моделирование<svg class="i10"><use href="#caret-lg"/></svg></h2>
    </section>
    <section class="panel p-mesh">
      <div class="body">
        <button class="big"><svg class="i32"><use href="#sphere"/></svg><span>Гладкий<br>объект</span></button>
        <div class="icons">
          <button aria-label="Больше сглаживания"><svg class="i16"><use href="#ball-plus"/></svg></button>
          <button aria-label="Меньше сглаживания"><svg class="i16"><use href="#ball-minus"/></svg></button>
          <button aria-label="Уточнить сеть"><svg class="i16"><use href="#ball-cut"/></svg></button>
        </div>
      </div>
      <h2>Сеть<svg class="launch"><use href="#launcher"/></svg></h2>
    </section>
    <section class="panel p-solid">
      <div class="body">
        <div class="icons">
          <button aria-label="Объединение"><svg class="i16"><use href="#union"/></svg></button><button aria-label="Взаимодействие"><svg class="i16"><use href="#interfere"/></svg></button>
          <button aria-label="Вычитание"><svg class="i16"><use href="#subtract"/></svg></button><button aria-label="Разрез"><svg class="i16"><use href="#slice"/></svg></button>
          <button aria-label="Пересечение"><svg class="i16"><use href="#intersect"/></svg></button><button aria-label="Толщина"><svg class="i16"><use href="#thicken"/></svg></button>
        </div>
        <div class="list">
          <button class="row"><svg class="i16"><use href="#edges"/></svg>Извлечь ребра<svg class="i8"><use href="#caret"/></svg></button>
          <button class="row"><svg class="i16"><use href="#extface"/></svg>Выдавить грани<svg class="i8"><use href="#caret"/></svg></button>
          <button class="row"><svg class="i16"><use href="#separate"/></svg>Разделить<svg class="i8"><use href="#caret"/></svg></button>
        </div>
      </div>
      <h2>Редактирование тела<svg class="i10"><use href="#caret-lg"/></svg></h2>
    </section>
    <section class="panel p-draw">
      <div class="body"><div class="icons">
        <button aria-label="Полилиния"><svg class="i16"><use href="#pline"/></svg></button><button aria-label="3D построение"><svg class="i16"><use href="#plane3d"/></svg></button><button aria-label="Дуга"><svg class="i16"><use href="#arc"/></svg></button><button aria-label="Варианты дуги"><svg class="i8"><use href="#caret"/></svg></button>
        <button aria-label="Сплайн"><svg class="i16"><use href="#spline"/></svg></button><button aria-label="Отрезок"><svg class="i16"><use href="#line"/></svg></button><button aria-label="Круг"><svg class="i16"><use href="#circle"/></svg></button><button aria-label="Варианты круга"><svg class="i8"><use href="#caret"/></svg></button>
        <button aria-label="Многоугольник"><svg class="i16"><use href="#polygon"/></svg></button><button aria-label="Прямоугольник"><svg class="i16"><use href="#rect"/></svg></button><button aria-label="Эллипс"><svg class="i16"><use href="#ellipse"/></svg></button><button aria-label="Варианты эллипса"><svg class="i8"><use href="#caret"/></svg></button>
      </div></div>
      <h2>Рисование<svg class="i10"><use href="#caret-lg"/></svg></h2>
    </section>
    <section class="panel p-edit">
      <div class="body"><div class="icons">
        <button aria-label="3D зеркало"><svg class="i16"><use href="#mirror"/></svg></button><button aria-label="3D перенос"><svg class="i16"><use href="#gizmo-move"/></svg></button><button aria-label="Перенести"><svg class="i16"><use href="#move"/></svg></button><button aria-label="Копировать"><svg class="i16"><use href="#copy"/></svg></button><button aria-label="Обрезать"><svg class="i16"><use href="#trim"/></svg></button><button aria-label="Варианты обрезки"><svg class="i8"><use href="#caret"/></svg></button>
        <button aria-label="3D выравнивание"><svg class="i16"><use href="#align"/></svg></button><button aria-label="3D поворот"><svg class="i16"><use href="#gizmo-rot"/></svg></button><button aria-label="Повернуть"><svg class="i16"><use href="#rotate"/></svg></button><button aria-label="Растянуть"><svg class="i16"><use href="#stretch"/></svg></button><button aria-label="Сопряжение"><svg class="i16"><use href="#fillet"/></svg></button><button aria-label="Варианты сопряжения"><svg class="i8"><use href="#caret"/></svg></button>
        <button aria-label="Стереть"><svg class="i16"><use href="#erase"/></svg></button><button aria-label="3D масштаб"><svg class="i16"><use href="#gizmo-scale"/></svg></button><button aria-label="Масштаб"><svg class="i16"><use href="#scale"/></svg></button><button aria-label="Смещение"><svg class="i16"><use href="#offset"/></svg></button><button aria-label="Массив"><svg class="i16"><use href="#array"/></svg></button><button aria-label="Варианты массива"><svg class="i8"><use href="#caret"/></svg></button>
      </div></div>
      <h2>Редактирование<svg class="i10"><use href="#caret-lg"/></svg></h2>
    </section>
    <section class="panel p-section">
      <div class="body"><button class="big"><svg class="i32"><use href="#section"/></svg><span>Секущая<br>плоскость</span></button></div>
      <h2>Сечение<svg class="i10"><use href="#caret-lg"/></svg><svg class="launch"><use href="#launcher"/></svg></h2>
    </section>
    <section class="panel p-ucs">
      <div class="body"><div class="icons">
        <button aria-label="Знак ПСК"><svg class="i16"><use href="#ucs-bulb"/></svg></button><button aria-label="Варианты знака"><svg class="i8"><use href="#caret"/></svg></button><button aria-label="ПСК"><svg class="i16"><use href="#ucs-calc"/></svg></button><button aria-label="Объект ПСК"><svg class="i16"><use href="#ucs-obj"/></svg></button><button aria-label="Именованные ПСК"><svg class="i16"><use href="#ucs-named"/></svg></button><button aria-label="МСК"><svg class="i16"><use href="#ucs-world"/></svg></button>
        <button aria-label="Поворот вокруг X"><svg class="i16"><use href="#ucs-rx"/></svg></button><button aria-label="Варианты поворота"><svg class="i8"><use href="#caret"/></svg></button><button aria-label="Предыдущая ПСК"><svg class="i16"><use href="#ucs-prev"/></svg></button><button aria-label="Начало ПСК"><svg class="i16"><use href="#ucs-org"/></svg></button><button aria-label="Ось Z"><svg class="i16"><use href="#ucs-z"/></svg></button><button aria-label="3 точки"><svg class="i16"><use href="#ucs-3"/></svg></button>
        <button aria-label="ПСК вида"><svg class="i16"><use href="#ucs-view"/></svg></button><button aria-label="Варианты вида"><svg class="i8"><use href="#caret"/></svg></button>
        <label class="combo"><svg class="i16"><use href="#ucs-world"/></svg><select aria-label="Система координат"><option>Мировая</option></select><svg class="i10"><use href="#caret-lg"/></svg></label>
      </div></div>
      <h2>Координаты<svg class="launch"><use href="#launcher"/></svg></h2>
    </section>
    <section class="panel p-view">
      <div class="body"><div class="list">
        <label class="combo"><svg class="i16"><use href="#wire"/></svg><select aria-label="Визуальный стиль"><option>2D-каркас</option></select><svg class="i10"><use href="#caret-lg"/></svg></label>
        <label class="combo"><svg class="i16"><use href="#unsaved"/></svg><select aria-label="Вид"><option>Несохраненный вид</option></select><svg class="i10"><use href="#caret-lg"/></svg></label>
        <button class="row"><svg class="i16"><use href="#vport"/></svg>Один видовой экран<svg class="i8"><use href="#caret"/></svg></button>
      </div></div>
      <h2>Вид<svg class="i10"><use href="#caret-lg"/></svg></h2>
    </section>
    <section class="panel p-select">
      <div class="body">
        <button class="big on" aria-pressed="true"><svg class="i32"><use href="#cull"/></svg><span>Отбор</span></button>
        <button class="big"><svg class="i32"><use href="#nofilter"/></svg><span>Без фильтра</span><svg class="i8"><use href="#caret"/></svg></button>
        <button class="big"><svg class="i32"><use href="#gizmo"/></svg><span>Гизмо<br>переноса</span></button>
        <svg class="i8 side"><use href="#caret"/></svg>
      </div>
      <h2>Выбор</h2>
    </section>
    <section class="panel p-layers">
      <div class="body">
        <button class="big"><svg class="i32"><use href="#layerprops"/></svg><span>Свойства<br>слоя</span></button>
        <div class="list">
          <label class="combo"><svg class="i16"><use href="#bulb"/></svg><svg class="i16"><use href="#sun"/></svg><svg class="i16"><use href="#unlock"/></svg><span class="swatch"></span><select aria-label="Слой"><option>0</option></select><svg class="i10"><use href="#caret-lg"/></svg></label>
          <div class="tools">
            <button aria-label="Отключить"><svg class="i16"><use href="#l-off"/></svg></button><button aria-label="Изолировать"><svg class="i16"><use href="#l-iso"/></svg></button><button aria-label="Заморозить"><svg class="i16"><use href="#l-freeze"/></svg></button><button aria-label="Блокировать"><svg class="i16"><use href="#l-lock"/></svg></button>
            <button class="row"><svg class="i16"><use href="#l-cur"/></svg>Сделать текущим</button>
          </div>
          <div class="tools">
            <button aria-label="Включить все"><svg class="i16"><use href="#l-on"/></svg></button><button aria-label="Отменить изоляцию"><svg class="i16"><use href="#l-uniso"/></svg></button><button aria-label="Разморозить"><svg class="i16"><use href="#l-thaw"/></svg></button><button aria-label="Разблокировать"><svg class="i16"><use href="#l-unlock"/></svg></button>
            <button class="row"><svg class="i16"><use href="#l-match"/></svg>Копировать свойства слоя</button>
          </div>
        </div>
      </div>
      <h2>Слои<svg class="i10"><use href="#caret-lg"/></svg></h2>
    </section>
    <section class="panel p-groups">
      <div class="body">
        <button class="big"><svg class="i32"><use href="#group"/></svg><span>Группа</span></button>
        <div class="icons">
          <button aria-label="Разгруппировать"><svg class="i16"><use href="#ungroup"/></svg></button>
          <button aria-label="Редактировать группу"><svg class="i16"><use href="#groupedit"/></svg></button>
          <button class="on" aria-pressed="true" aria-label="Выбор групп"><svg class="i16"><use href="#groupsel"/></svg></button>
        </div>
      </div>
      <h2>Группы<svg class="i10"><use href="#caret-lg"/></svg></h2>
    </section>
    <section class="panel p-base">
      <div class="body"><button class="big"><svg class="i32"><use href="#base"/></svg><span>Базовый</span><svg class="i8"><use href="#caret"/></svg></button></div>
      <h2>Вид<svg class="i10"><use href="#caret-lg"/></svg><svg class="launch"><use href="#launcher"/></svg></h2>
    </section>
  </div>

  <nav class="file-tabs">
    <button class="menu" aria-label="Список чертежей"><svg><use href="#menu"/></svg></button>
    <i class="slash"></i><button>Начало</button>
    <i class="slash"></i><button>ГЧ ИОС1*</button>
    <div class="current"><button>17.03 План*</button><button class="close" aria-label="Закрыть чертеж"><svg class="i10"><use href="#cross"/></svg></button></div>
    <button class="add" aria-label="Новый чертеж"><svg class="i14"><use href="#plus"/></svg></button>
    <i class="slash"></i>
  </nav>

  <main class="canvas">
    <svg class="drawing" viewBox="0 182 1920 825" preserveAspectRatio="xMidYMid slice" role="img" aria-label="План">
      <g stroke="#272f37"><path d="M356.500 182v825M575.500 182v825M795.500 182v825M1014.500 182v825M1452.500 182v825M1671.500 182v825M1891.500 182v825M0 430.500h1920M0 649.500h1920M0 868.500h1920"/><path d="M136.500 182v825M1233.500 182v825M0 210.500h1920" stroke="#2d353e"/></g>
      <g stroke="#22c322" stroke-width="1.300"><path d="M64.500 209v15M75 227h7M1673 296h11M1858 366h17.500v18" fill="none"/></g>
      <use href="#mark" x="1736" y="366"/><use href="#mark" x="1806" y="435"/><use href="#mark" x="1875" y="505"/>
      <g fill="none" stroke="#fff" stroke-width="3.200">
        <path d="M0 210L1149 491L1051 886L0 629M248 270L153 667"/>
        <path d="M1065 831L1113 842L1106 870L1058 858"/>
        <path d="M1632 181L1921 401"/>
        <path d="M1633 909L1659 929L1637 957L1611 936z"/>
        <path d="M1521 1008L1518 980L1868 949L1874 1008"/>
        <path d="M301 1008L303 996L342 1008"/>
      </g>
      <g fill="none" stroke="#e8eaec" stroke-width="1.200">
        <path d="M153 182Q153 206 141 242"/>
        <path d="M453 182L422 311M524 182L505 280M517 260L501 330"/>
        <path d="M429 312L446 243L517 260L535 245L1240 430L1221 505"/>
        <path d="M471 182L469 186L544 210L542 226L1244 408L1286 224"/>
        <path d="M1303 234L1263 414L1591 498M1239 512L1258 438L1631 535"/>
        <path d="M1246 182L1591 498L1631 535L1692 587L1865 667L1920 706"/>
        <path d="M1568 182L1600 207L1678 269L1662 376L1780 481L1920 563"/>
        <path d="M995 873C984 920 979 975 1004 1007"/>
        <path d="M1246 1007Q1270 950 1290 880Q1320 790 1346 697L1542 755Q1525 810 1507 880Q1492 940 1478 1007"/>
        <path d="M257 1007L303 996M0 1001L22 1007"/>
        <path d="M851 345L888 354L885 367L847 357zM943 362L981 374L977 388L939 377z"/>
        <path d="M1773 463L1810 475L1807 483L1771 472zM1773 463L1807 483M1771 472L1810 475"/>
        <path d="M1671 611L1706 622L1703 634L1668 622zM1671 611L1703 634M1668 622L1706 622"/>
        <path d="M1909 498L1902 515L1925 522L1931 504zM1909 498L1925 522M1902 515L1931 504"/>
      </g>
      <path d="M0 735L641 889L639 893L0 739" fill="none" stroke="#cfe0e4" stroke-width="1.200"/>
      <path d="M0 737L640 891" stroke="#5aa7a0" stroke-dasharray="1 39" stroke-width="3"/>
      <use href="#tree" transform="translate(992 211) rotate(-20)"/><use href="#tree" transform="translate(842 266) rotate(-20)"/><use href="#tree" transform="translate(698 321) rotate(-20)"/>
      <use href="#tree" transform="translate(1180 485) rotate(14)"/><use href="#tree" transform="translate(1304 518) rotate(14)"/><use href="#tree" transform="translate(1433 551) rotate(14)"/><use href="#tree" transform="translate(1559 584) rotate(14)"/>
      <path d="M500 290L521 295L513 332" fill="none" stroke="#fff" stroke-opacity=".35" stroke-width="6"/>
      <path d="M500 290L521 295L513 332" fill="none" stroke="#fff" stroke-width="2.500"/>
      <path d="M455 286.500H500M507 286.500H552M503.500 238V283M503.500 290V335M500.500 283.500h6v6h-6z" fill="none" stroke="#fff"/>
      <path d="M20.500 936V986.500H71M16.500 981.500h9v9h-9z" fill="none" stroke="#fff" stroke-width="1.300"/>
      <path d="M22 919l6 7 6-7M28 926v6M75 972l13 13M88 972l-13 13" fill="none" stroke="#e8eaec" stroke-width="1.200"/>
    </svg>

    <div class="vp-label"><button>[−]</button><button>[Сверху]</button><button>[2D-каркас]</button></div>
    <div class="vp-window">
      <button aria-label="Свернуть вид"><svg viewBox="0 0 10 10"><path d="M0 8h10" stroke="#fff" stroke-width="3"/></svg></button>
      <button aria-label="Восстановить вид"><svg viewBox="0 0 10 10"><path d="M1 3h6v6H1zM3 1h6v6" fill="none" stroke="#fff" stroke-width="1.600"/></svg></button>
      <button aria-label="Закрыть вид"><svg viewBox="0 0 10 10"><path d="M1 1l8 8M9 1L1 9" stroke="#fff" stroke-width="2"/></svg></button>
    </div>
    <div class="viewcube">
      <span class="n">С</span><span class="w">З</span><button class="top">Сверху</button><span class="e">В</span><span class="s">Ю</span>
    </div>
    <button class="wcs">МСК<svg class="i10" viewBox="0 0 10 8"><path d="M1 5V2h8v3" fill="none" stroke="currentColor"/></svg></button>
    <div class="navbar">
      <i class="pin"></i>
      <button aria-label="Штурвал"><svg class="i22"><use href="#nav-wheel"/></svg><svg class="i8"><use href="#caret"/></svg></button>
      <button aria-label="Панорамирование"><svg class="i22"><use href="#nav-hand"/></svg></button>
      <button aria-label="Зумирование"><svg class="i22"><use href="#nav-zoom"/></svg><svg class="i8"><use href="#caret"/></svg></button>
      <button aria-label="Орбита"><svg class="i22"><use href="#nav-orbit"/></svg><svg class="i8"><use href="#caret"/></svg></button>
      <button aria-label="Аниматор"><svg class="i24"><use href="#nav-motion"/></svg></button>
      <i class="pin"></i>
    </div>
    <div class="command">
      <i class="grip"></i>
      <button aria-label="Закрыть"><svg class="i10"><use href="#cross"/></svg></button>
      <button aria-label="Настройка"><svg class="i16"><use href="#wrench"/></svg></button>
      <div class="entry"><svg class="i16"><use href="#prompt"/></svg><svg class="i8"><use href="#caret"/></svg><input type="text" aria-label="Командная строка" placeholder="Введите команду"><svg class="i8 up"><use href="#caret"/></svg></div>
    </div>
  </main>

  <footer class="statusbar">
    <nav class="layouts">
      <button class="menu" aria-label="Листы"><svg><use href="#menu"/></svg></button>
      <button class="current">Модель</button><button>Лист1</button><i class="slash"></i><button>Лист2</button><i class="slash"></i>
      <button class="add" aria-label="Новый лист"><svg class="i14"><use href="#plus"/></svg></button><i class="slash"></i>
    </nav>
    <div class="toggles">
      <div class="set"><button class="model">МОДЕЛЬ</button></div>
      <div class="set"><button class="on" aria-label="Сетка"><svg class="i16"><use href="#s-grid"/></svg></button><button aria-label="Шаг"><svg class="i16"><use href="#s-snap"/></svg></button><button class="dd" aria-label="Режимы шага"><svg class="i10"><use href="#caret-lg"/></svg></button></div>
      <div class="set"><button aria-label="Орто"><svg class="i16"><use href="#s-ortho"/></svg></button><button aria-label="Полярное отслеживание"><svg class="i16"><use href="#s-polar"/></svg></button><button class="dd" aria-label="Углы"><svg class="i10"><use href="#caret-lg"/></svg></button><button aria-label="Изометрия"><svg class="i16"><use href="#s-iso"/></svg></button><button class="dd" aria-label="Плоскости"><svg class="i10"><use href="#caret-lg"/></svg></button><button class="on" aria-label="Отслеживание"><svg class="i16"><use href="#s-track"/></svg></button><button class="on" aria-label="Привязка"><svg class="i16"><use href="#s-osnap"/></svg></button><button class="dd" aria-label="Режимы привязки"><svg class="i10"><use href="#caret-lg"/></svg></button></div>
      <div class="set"><button class="on" aria-label="Вес линий"><svg class="i16"><use href="#s-lwt"/></svg></button></div>
      <div class="set"><button class="on" aria-label="Видимость аннотаций"><svg class="i16"><use href="#s-anno-o"/></svg></button><button aria-label="Автомасштаб"><svg class="i16"><use href="#s-anno-z"/></svg></button><button aria-label="Масштаб аннотаций"><svg class="i16"><use href="#s-anno"/></svg></button><button class="scale">1:1<svg class="i10"><use href="#caret-lg"/></svg></button></div>
      <div class="set"><button aria-label="Рабочее пространство"><svg class="i16"><use href="#s-gear"/></svg></button><button class="dd" aria-label="Пространства"><svg class="i10"><use href="#caret-lg"/></svg></button></div>
      <div class="set"><button aria-label="Монитор аннотаций"><svg class="i16"><use href="#plus"/></svg></button></div>
      <div class="set"><button aria-label="Изоляция объектов"><svg class="i16"><use href="#s-shapes"/></svg></button></div>
      <div class="set"><button class="wide" aria-label="Производительность"><svg class="i16"><use href="#s-hw"/></svg></button></div>
      <div class="set"><button aria-label="Очистить экран"><svg class="i16"><use href="#s-full"/></svg></button></div>
      <div class="set"><button aria-label="Адаптация"><svg class="i16"><use href="#menu"/></svg></button></div>
    </div>
    <div class="watermark">ALL Versions</div>
  </footer>
</div>
</body>
</html>
```
FILE: styles.css
```css
* { box-sizing: border-box; }

body {
  margin: 0;
  background: #222933;
  color: #e6e9ec;
  font: 12px/15px Roboto, "Noto Sans", sans-serif;
}

button, select, input { font: inherit; color: inherit; }
button { display: flex; align-items: center; justify-content: center; padding: 0; border: 0; background: none; white-space: nowrap; }
svg { flex: none; display: block; }
.sprite { position: absolute; width: 0; height: 0; }

.i8 { width: 8px; height: 8px; }
.i10 { width: 10px; height: 10px; }
.i14 { width: 14px; height: 14px; }
.i16 { width: 16px; height: 16px; }
.i22 { width: 22px; height: 22px; }
.i24 { width: 24px; height: 24px; }
.i32 { width: 32px; height: 32px; }

.app { display: flex; flex-direction: column; min-height: 100vh; }

/* Title bar */
.titlebar { position: relative; display: flex; align-items: center; height: 28px; }
.quick, .account { display: flex; align-items: center; height: 28px; }
.quick { width: 736px; padding-left: 15px; }
.logo { gap: 3px; width: 42px; justify-content: flex-start; }
.qa { width: 24px; height: 24px; }
.drop { width: 12px; height: 24px; }
.more { margin-left: 2px; }
.dim { color: #6a717b; }
.share { gap: 4px; margin-left: 6px; color: #7cc0f0; }
.doc-title { display: flex; flex: 1; gap: 12px; white-space: nowrap; }
.account { color: #d5d8dc; }
.play { border: 4px solid transparent; border-left-color: #dcdcdc; border-right: 0; margin-right: 6px; }
.find { width: 178px; height: 20px; padding: 0 2px; border: 0; background: #434c5b; font-style: italic; }
.find::placeholder { color: #aeb4bd; }
.signin { gap: 5px; margin-left: 4px; }
.pair { gap: 4px; width: 34px; }
.apps { margin-left: 3px; }
.rule { width: 1px; height: 20px; margin: 0 6px 0 4px; background: #4a5260; }
.window-buttons { display: flex; width: 200px; justify-content: flex-end; }
.window-buttons button { width: 46px; height: 28px; }
.progress { position: absolute; top: 0; left: 840px; width: 241px; height: 1px; background: linear-gradient(90deg, #2f6ea0 48px, #e8eef2 48px); }

/* Ribbon tabs */
.ribbon-tabs { display: flex; align-items: flex-end; height: 24px; padding-left: 4px; }
.ribbon-tabs button { height: 20px; padding: 0 9px; color: #b4b9c1; border-radius: 2px 2px 0 0; }
.ribbon-tabs .active { background: #3b4453; color: #eef0f2; }
.ribbon-tabs .collapse { gap: 3px; padding-left: 20px; }
.chip { width: 15px; height: 8px; background: #f2f4f6; }
.chip::after { content: ""; display: block; width: 0; margin: 2px auto 0; border: 3px solid transparent; border-top: 0; border-bottom-color: #444; }

/* Ribbon */
.ribbon { display: flex; height: 99px; background: #3b4453; }
.panel { display: flex; flex-direction: column; flex: none; border-right: 1px solid #29313d; }
.panel .body { display: flex; height: 74px; margin-top: 5px; }
.panel h2 { display: flex; align-items: center; justify-content: center; gap: 6px; height: 20px; margin: 0; font-size: 12px; font-weight: 400; }
.panel .launch { width: 8px; height: 8px; }
.p-mesh .launch { margin: 0 -18px 0 16px; }
.p-ucs .launch { margin: 0 -36px 0 22px; }
.p-base h2 { justify-content: flex-start; padding-left: 11px; }
.p-base .launch { margin-left: 4px; }
.big { flex-direction: column; justify-content: flex-start; padding-top: 4px; width: 72px; text-align: center; }
.big span { margin-top: 4px; }
.big.on { border: 1px solid #7fb9e6; background: #3f5b78; padding-top: 3px; }
.icons { display: grid; grid-auto-rows: 24px; align-content: start; }
.list { display: flex; flex-direction: column; flex: 1; min-width: 0; }
.row { height: 24px; justify-content: flex-start; gap: 5px; }
.combo { display: flex; align-items: center; gap: 2px; height: 21px; margin: 1px 3px 2px 3px; padding: 0 2px; border: 1px solid #29313d; background: #4a5568; }
.combo select { flex: 1; min-width: 0; padding: 0; border: 0; background: none; appearance: none; }

.p-model { width: 236px; }
.p-model .big:first-child { width: 60px; }
.p-model .big { width: 70px; }
.p-model .list { padding-left: 5px; }
.p-mesh { width: 81px; }
.p-mesh .big { width: 54px; }
.p-mesh .icons { grid-template-columns: 24px; }
.p-solid { width: 188px; }
.p-solid .icons { grid-template-columns: 30px 27px; }
.p-solid .list { padding-left: 3px; }
.p-solid .row { gap: 4px; }
.p-draw { width: 94px; }
.p-draw .icons { grid-template-columns: 28px 24px 30px 8px; }
.p-edit { width: 145px; }
.p-edit .icons { grid-template-columns: 28px 26px 24px 30px 24px 8px; }
.p-section { width: 84px; }
.p-section .big { width: 83px; }
.p-section h2 { gap: 5px; }
.p-ucs { width: 145px; }
.p-ucs .icons { grid-template-columns: 28px 8px 36px 20px 32px 20px; }
.p-ucs .combo { grid-column: 3 / 7; margin: 1px 0 2px 6px; }
.p-view { width: 205px; }
.p-view .row { padding-left: 6px; }
.p-select { width: 210px; }
.p-select .big { width: 82px; }
.p-select .big.on { width: 41px; margin: 0 4px 2px 2px; }
.p-select .side { margin: 51px 0 0 -12px; }
.p-layers { width: 335px; }
.p-layers .big { width: 60px; }
.p-layers .combo { width: 207px; margin-left: 1px; gap: 3px; }
.swatch { width: 14px; height: 14px; margin-right: 3px; background: #fff; }
.tools { display: flex; height: 24px; }
.tools button:not(.row) { width: 24px; }
.tools .row { gap: 4px; padding-left: 3px; }
.p-groups { width: 75px; }
.p-groups .big { width: 48px; }
.p-groups .icons { grid-template-columns: 24px; }
.p-groups .icons .on { border: 1px solid #7fb9e6; background: #3f5b78; }
.p-base { flex: 1; }
.p-base .big { width: 68px; }

/* Drawing tabs */
.file-tabs, .layouts { display: flex; align-items: center; }
.file-tabs { height: 31px; padding: 3px 0 0 16px; border-bottom: 4px solid #3b4453; }
.menu svg { width: 16px; height: 12px; }
.slash { width: 1px; height: 16px; background: #4e5866; transform: rotate(22deg); }
.file-tabs .slash { margin: 0 11px; }
.file-tabs .menu { margin-right: 3px; }
.file-tabs .current { display: flex; gap: 8px; height: 24px; margin: 0 8px 0 20px; padding: 0 11px 0 17px; background: #3b4453; font-weight: 700; clip-path: polygon(8px 0, 100% 0, calc(100% - 8px) 100%, 0 100%); }
.close { color: #a3aab3; }

/* Drawing area */
.canvas { position: relative; flex: 1; min-height: 400px; overflow: hidden; background: #212830; }
.drawing { position: absolute; inset: 0; width: 100%; height: 100%; }
.vp-label { position: absolute; top: 7px; left: 4px; display: flex; }
.vp-window { position: absolute; top: 10px; right: 11px; display: flex; gap: 9px; }
.vp-window svg { width: 11px; height: 11px; }
.viewcube { position: absolute; top: 46px; right: 23px; display: grid; grid-template: 34px 52px 34px / 34px 52px 34px; place-items: center; width: 120px; height: 120px; border: 13px solid rgba(120, 126, 132, .4); border-radius: 50%; place-content: center; color: rgba(200, 203, 206, .85); font-size: 21px; line-height: 20px; }
.viewcube .n { grid-area: 1 / 2; align-self: start; margin-top: -6px; }
.viewcube .w { grid-area: 2 / 1; justify-self: start; margin-left: -3px; }
.viewcube .e { grid-area: 2 / 3; justify-self: end; margin-right: -3px; }
.viewcube .s { grid-area: 3 / 2; align-self: end; margin-bottom: -6px; }
.viewcube .top { grid-area: 2 / 2; width: 52px; height: 52px; background: #b4b7b8; color: #4a4d50; font-size: 14px; }
.wcs { position: absolute; top: 193px; right: 60px; width: 47px; height: 18px; gap: 6px; border-radius: 4px; background: #8e9199; color: #4c4f58; font-size: 11px; }
.navbar { position: absolute; top: 236px; right: 4px; display: flex; flex-direction: column; align-items: center; justify-content: space-between; width: 32px; height: 212px; padding: 3px 0; border-radius: 3px; background: rgba(112, 116, 118, .75); color: #474c50; }
.navbar button { flex-direction: column; gap: 5px; }
.pin { align-self: flex-end; width: 7px; height: 7px; margin-right: 2px; border: 1px solid #474c50; border-radius: 2px; }
.command { position: absolute; left: 387px; right: 385px; bottom: 1px; display: flex; align-items: center; height: 25px; color: #b9bdc2; }
.grip { width: 6px; height: 18px; background: repeating-linear-gradient(0deg, transparent 0 1px, #222933 1px 3px), repeating-linear-gradient(90deg, #aeb2b7 0 1px, #222933 1px 2px); }
.command > button { width: 24px; height: 25px; }
.entry { display: flex; align-items: center; flex: 1; height: 25px; padding: 0 4px; border-radius: 2px; background: rgba(248, 248, 248, .73); color: #444; }
.entry .i8 { margin-left: 2px; }
.entry input { flex: 1; margin-left: 7px; padding: 0; border: 0; background: none; font: italic 12px/15px "DejaVu Sans Mono", monospace; }
.entry input::placeholder { color: #62656a; opacity: 1; }
.up { transform: rotate(180deg); }

/* Status bar */
.statusbar { position: relative; display: flex; justify-content: space-between; height: 32px; border-top: 4px solid #3b4453; }
.layouts { padding: 0 0 3px 16px; }
.layouts .slash { margin: 0 11px; }
.layouts .current { height: 24px; margin: 0 8px 0 10px; padding: 0 17px; background: #3b4453; font-weight: 700; clip-path: polygon(8px 0, 100% 0, calc(100% - 8px) 100%, 0 100%); }
.toggles { display: flex; gap: 3px; padding: 2px 2px 3px 0; color: #dfe3e7; }
.set { display: flex; background: #333c49; }
.set button { width: 24px; height: 23px; }
.set .dd { width: 15px; }
.set .on { background: #5b84b8; border: solid #333c49; border-width: 0 1px; }
.set .model { width: 58px; }
.set .scale { width: 35px; gap: 2px; }
.set .wide { width: 28px; }
.watermark { position: absolute; right: 21px; top: -28px; color: rgba(255, 255, 255, .42); font: bold 40px/44px "Liberation Sans", sans-serif; pointer-events: none; }
```
